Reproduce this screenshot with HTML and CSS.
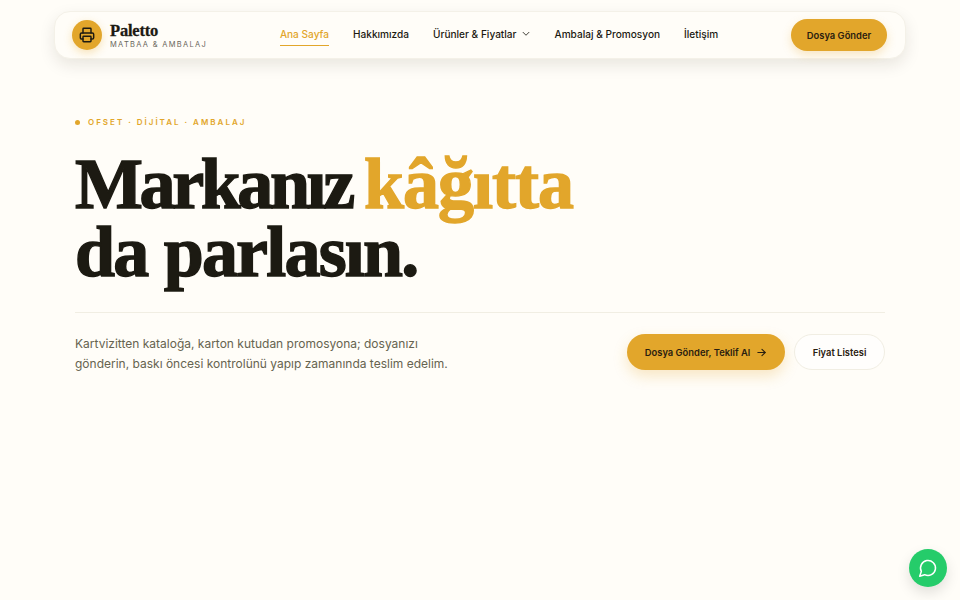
FILE: index.html
```html
<!DOCTYPE html>
<html lang="tr">
  <head>
    <meta charset="UTF-8" />
    <meta name="viewport" content="width=device-width, initial-scale=1.0" />
    <title>Paletto Matbaa</title>
    <link rel="stylesheet" href="styles.css">
  </head>
  <body>
    <header class="navbar">
      <a class="brand" href="#">
        <span class="brand-icon">
          <svg width="16" height="16" viewBox="0 0 24 24" fill="none" stroke="currentColor" stroke-width="2.2" stroke-linecap="round" stroke-linejoin="round">
            <path d="M6 18H4a2 2 0 0 1-2-2v-5a2 2 0 0 1 2-2h16a2 2 0 0 1 2 2v5a2 2 0 0 1-2 2h-2"/>
            <path d="M6 9V3a1 1 0 0 1 1-1h10a1 1 0 0 1 1 1v6"/>
            <rect x="6" y="14" width="12" height="8" rx="1"/>
          </svg>
        </span>
        <span class="brand-text">
          <span class="brand-name">Paletto</span>
          <span class="brand-sub">MATBAA &amp; AMBALAJ</span>
        </span>
      </a>
      <nav class="nav-links">
        <a class="nav-link active" href="#">Ana Sayfa</a>
        <a class="nav-link" href="#">Hakkımızda</a>
        <a class="nav-link" href="#">Ürünler &amp; Fiyatlar
          <svg width="10" height="10" viewBox="0 0 24 24" fill="none" stroke="currentColor" stroke-width="2" stroke-linecap="round" stroke-linejoin="round"><path d="m5 8 7 7 7-7"/></svg>
        </a>
        <a class="nav-link" href="#">Ambalaj &amp; Promosyon</a>
        <a class="nav-link" href="#">İletişim</a>
      </nav>
      <a class="btn btn-nav" href="#">Dosya Gönder</a>
    </header>

    <main class="hero">
      <p class="eyebrow"><span class="dot"></span>OFSET · DİJİTAL · AMBALAJ</p>
      <h1><span class="word-tight">Markanız</span> <em>kâğıtta</em><br>da parlasın.</h1>
      <div class="hero-bottom">
        <p class="lead">Kartvizitten kataloğa, karton kutudan promosyona; dosyanızı gönderin, baskı öncesi kontrolünü yapıp zamanında teslim edelim.</p>
        <div class="hero-actions">
          <a class="btn btn-primary" href="#">Dosya Gönder, Teklif Al
            <svg width="11" height="11" viewBox="0 0 24 24" fill="none" stroke="currentColor" stroke-width="2.4" stroke-linecap="round" stroke-linejoin="round"><path d="M4 12h16"/><path d="m13 5 7 7-7 7"/></svg>
          </a>
          <a class="btn btn-ghost" href="#">Fiyat Listesi</a>
        </div>
      </div>
    </main>

    <a class="chat" href="#">
      <svg width="20" height="20" viewBox="0 0 24 24" fill="none" stroke="currentColor" stroke-width="1.8" stroke-linecap="round" stroke-linejoin="round"><path d="M7.9 20A9 9 0 1 0 4 16.1L2 22Z"/></svg>
    </a>
  </body>
</html>
```

FILE: styles.css
```css
* {
  box-sizing: border-box;
}
body {
  margin: 0;
  height: 600px;
  overflow: hidden;
  background: #fffdf8;
  color: #1c1a12;
  font-family: Inter, sans-serif;
}
a {
  color: inherit;
  text-decoration: none;
}
.navbar {
  display: flex;
  align-items: center;
  justify-content: space-between;
  width: 852px;
  height: 48px;
  margin: 11px auto 0;
  padding: 0 18px 0 17px;
  background: #fffdf8;
  border: 1px solid #f4f1e8;
  border-radius: 16px;
  box-shadow: 0 6px 16px rgba(40, 34, 10, 0.1);
}
.brand {
  display: flex;
  align-items: center;
  gap: 8px;
}
.brand-icon {
  display: flex;
  align-items: center;
  justify-content: center;
  width: 30px;
  height: 30px;
  border-radius: 50%;
  background: #e2a62b;
  box-shadow: 0 3px 8px rgba(227, 165, 38, 0.3);
}
.brand-text {
  display: flex;
  flex-direction: column;
  margin-top: 2px;
}
.brand-name {
  font-family: "Liberation Serif", serif;
  font-size: 16.5px;
  font-weight: 700;
  line-height: 17px;
  letter-spacing: -0.2px;
  -webkit-text-stroke: 0.3px currentColor;
}
.brand-sub {
  font-size: 7.5px;
  line-height: 11px;
  letter-spacing: 1.3px;
  color: #6a675c;
}
.nav-links {
  display: flex;
  gap: 24px;
  margin-top: -1px;
}
.nav-link {
  display: flex;
  align-items: center;
  gap: 4px;
  padding: 3px 0;
  font-size: 10.1px;
  font-weight: 500;
  line-height: 16px;
  border-bottom: 1.5px solid transparent;
}
.nav-link.active {
  color: #e2a62b;
  border-bottom-color: #e2a62b;
}
.btn {
  display: flex;
  align-items: center;
  justify-content: center;
  border-radius: 999px;
  font-weight: 600;
  font-size: 9.4px;
  color: #2a2010;
}
.btn-nav {
  width: 96px;
  height: 32px;
  background: #e2a62b;
  box-shadow: 0 4px 10px rgba(227, 165, 38, 0.25);
}
.hero {
  padding: 57px 75px 0;
}
.eyebrow {
  display: flex;
  align-items: center;
  gap: 8px;
  margin: 0;
  font-size: 8px;
  font-weight: 600;
  line-height: 12px;
  letter-spacing: 2px;
  color: #e2a62b;
}
.dot {
  width: 5px;
  height: 5px;
  border-radius: 50%;
  background: #e2a62b;
}
h1 {
  margin: 22px 0 0;
  padding-bottom: 26px;
  border-bottom: 1px solid #f1eee3;
  font-family: "Liberation Serif", serif;
  font-size: 72px;
  font-weight: 700;
  line-height: 68px;
  letter-spacing: -1.8px;
  -webkit-text-stroke: 1.4px currentColor;
}
.word-tight {
  letter-spacing: -3.4px;
}
h1 em {
  margin-left: -4px;
  font-style: normal;
  letter-spacing: -1px;
  color: #e2a62b;
}
.hero-bottom {
  display: flex;
  align-items: flex-start;
  justify-content: space-between;
  margin-top: 21px;
}
.lead {
  width: 385px;
  margin: 0;
  font-size: 12px;
  line-height: 19.5px;
  color: #66634f;
}
.hero-actions {
  display: flex;
  gap: 9px;
}
.btn-primary {
  gap: 6px;
  width: 158px;
  height: 36px;
  background: #e2a62b;
  box-shadow: 0 6px 14px rgba(227, 165, 38, 0.25);
}
.btn-ghost {
  width: 91px;
  height: 36px;
  background: #fffefc;
  border: 1px solid #f1eee3;
}
.chat {
  position: absolute;
  right: 13px;
  bottom: 13px;
  display: flex;
  align-items: center;
  justify-content: center;
  width: 38px;
  height: 38px;
  border-radius: 50%;
  background: #25cc6a;
  color: #fff;
  box-shadow: 0 6px 14px rgba(0, 0, 0, 0.12);
}
```
